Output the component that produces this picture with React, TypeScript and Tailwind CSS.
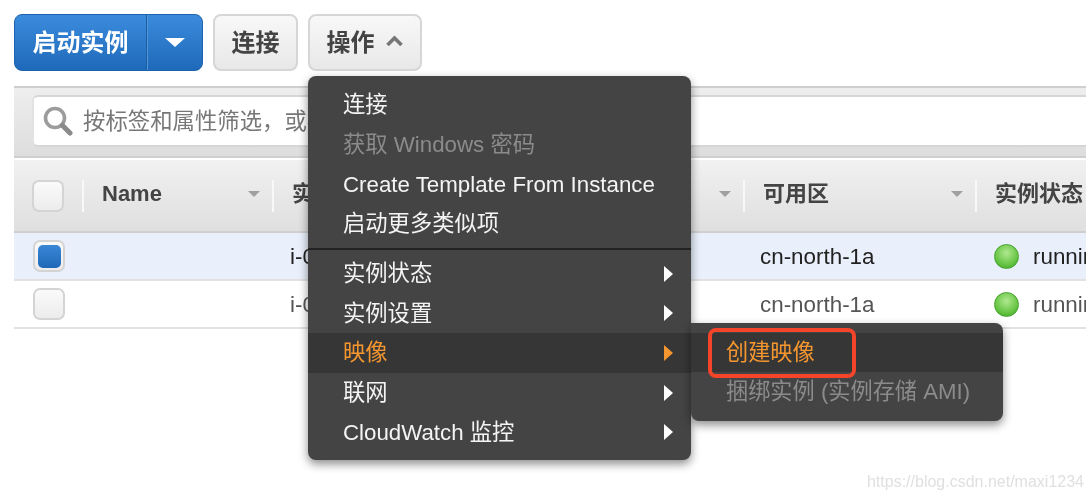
import React from "react";

const upperItems = [
  { label: "连接" },
  { label: "获取 Windows 密码", disabled: true },
  { label: "Create Template From Instance" },
  { label: "启动更多类似项" },
];

const lowerItems = [
  { label: "实例状态" },
  { label: "实例设置" },
  { label: "映像", active: true },
  { label: "联网" },
  { label: "CloudWatch 监控" },
];

function Caret({ className }: { className: string }) {
  return <span className={`h-0 w-0 border-x-[6px] border-t-[6px] border-x-transparent ${className}`} />;
}

function Checkbox({ checked }: { checked?: boolean }) {
  return (
    <div className="flex size-[32px] items-center justify-center rounded-[7px] border-2 border-[#d4d4d4] bg-gradient-to-b from-[#fafafa] to-[#ececec]">
      {checked && <div className="size-[23px] rounded-[5px] bg-gradient-to-b from-[#3a87d6] to-[#1f68b8]" />}
    </div>
  );
}

function HeaderCell({ label, width, caret = true }: { label: string; width: string; caret?: boolean }) {
  return (
    <div className={`flex h-[32px] shrink-0 items-center border-l-2 border-[#f8f8f8] pl-[18px] pr-[12px] ${width}`}>
      <span className="-mt-[5px] whitespace-nowrap text-[22px] font-bold text-[#444]">{label}</span>
      {caret && <Caret className="-mt-[3px] ml-auto border-t-[#a0a0a0]" />}
    </div>
  );
}

function Row({ selected, color }: { selected?: boolean; color: string }) {
  return (
    <div className={`flex h-[48px] items-center overflow-hidden border-b-2 border-[#e2e2e2] text-[22.4px] ${color} ${selected ? "bg-[#e9f0fb]" : "bg-white"}`}>
      <div className="w-[276px] shrink-0 pl-[19px]">
        <Checkbox checked={selected} />
      </div>
      <span className="w-[470px] shrink-0 whitespace-nowrap pt-[1px]">i-0</span>
      <span className="w-[234px] shrink-0 whitespace-nowrap pt-[1px]">cn-north-1a</span>
      <span className="size-[25px] shrink-0 rounded-full border border-[#46a32e] bg-[radial-gradient(circle_at_50%_35%,#b0e890,#62c23f_65%,#3f9c2a)]" />
      <span className="ml-[14px] whitespace-nowrap pt-[1px]">running</span>
    </div>
  );
}

function MenuRow({ label, disabled, active, arrow }: { label: string; disabled?: boolean; active?: boolean; arrow?: boolean }) {
  const tone = active ? "text-[#f5962f]" : disabled ? "text-[#8b8b8b]" : "text-[#f4f4f4]";
  return (
    <div className={`flex h-[39.7px] items-center pl-[35px] pr-[18px] text-[22.3px] ${tone} ${active ? "bg-[#363636]" : ""}`}>
      <span className="whitespace-nowrap">{label}</span>
      {arrow && (
        <span className={`ml-auto h-0 w-0 border-y-[8px] border-l-[9px] border-y-transparent ${active ? "border-l-[#f5962f]" : "border-l-white"}`} />
      )}
    </div>
  );
}

export default function App() {
  return (
    <div className="relative h-[500px] w-[1092px] overflow-hidden bg-white pl-[14px] pr-[6px] pt-[14px] font-['Liberation_Sans','Noto_Sans_CJK_SC',sans-serif] blur-[0.4px]">
      <div className="flex items-center">
        <div className="flex h-[57px] w-[189px] rounded-[8px] border border-[#1d63ad] bg-gradient-to-b from-[#3b8bdc] to-[#1f69ba] text-white">
          <div className="flex w-[132px] items-center justify-center border-r border-[#1a5ea6] text-[24px] font-bold">启动实例</div>
          <div className="flex flex-1 items-center justify-center border-l border-[#5495d8]">
            <span className="h-0 w-0 border-x-[10px] border-t-[9px] border-x-transparent border-t-white" />
          </div>
        </div>
        <button className="ml-[10px] flex h-[57px] w-[85px] items-center justify-center rounded-[8px] border-2 border-[#d6d6d6] bg-gradient-to-b from-[#f8f8f8] to-[#e8e8e8] text-[24px] font-bold text-[#444]">
          连接
        </button>
        <button className="ml-[10px] flex h-[57px] w-[114px] items-center justify-center gap-[11px] rounded-[8px] border-2 border-[#d6d6d6] bg-gradient-to-b from-[#f8f8f8] to-[#e8e8e8] pr-[1px] text-[24px] font-bold text-[#444]">
          操作
          <svg width="17" height="11" viewBox="0 0 17 11" fill="none" className="-mt-[4px]">
            <path d="M1.5 10 8.5 3 15.5 10" stroke="#777" strokeWidth="3.6" />
          </svg>
        </button>
      </div>

      <div className="mt-[15px] h-[72px] border-y-2 border-[#cfcfcf] bg-gradient-to-b from-[#eeeeee] to-[#dddddd] pb-[9px] pl-[18px] pt-[7px]">
        <div className="flex h-full items-center rounded-l-[6px] border-y-2 border-l-2 border-y-[#d6d6d6] border-l-[#e2e2e2] bg-white pl-[9px]">
          <svg width="30" height="30" viewBox="0 0 30 30" fill="none" className="shrink-0">
            <circle cx="12" cy="12" r="9.5" stroke="#9c9c9c" strokeWidth="3.6" />
            <path d="M19.5 19.5 27 27" stroke="#8a8a8a" strokeWidth="5" strokeLinecap="round" />
          </svg>
          <span className="ml-[10px] whitespace-nowrap pt-[1px] text-[22.4px] text-[#777]">按标签和属性筛选，或按关键字搜索</span>
        </div>
      </div>

      <div className="mt-[2px] flex h-[73px] items-center border-b-2 border-[#cfcfcf] bg-gradient-to-b from-[#f1f1f1] to-[#dfdfdf]">
        <div className="w-[68px] shrink-0 pl-[18px]">
          <Checkbox />
        </div>
        <HeaderCell label="Name" width="w-[190px]" />
        <HeaderCell label="实例 ID" width="w-[471px]" />
        <HeaderCell label="可用区" width="w-[232px]" />
        <HeaderCell label="实例状态" width="w-[111px]" caret={false} />
      </div>
      <Row selected color="text-[#222]" />
      <Row color="text-[#555]" />

      <div className="absolute left-[308px] top-[76px] w-[383px] rounded-[8px] bg-[#444444] pb-[8px] pt-[9px] shadow-[0_4px_10px_rgba(0,0,0,0.45)]">
        {upperItems.map((item) => (
          <MenuRow key={item.label} {...item} />
        ))}
        <div className="my-[4px] border-t-2 border-[#222]" />
        {lowerItems.map((item) => (
          <MenuRow key={item.label} {...item} arrow />
        ))}
      </div>

      <div className="absolute left-[691px] top-[323px] h-[98px] w-[312px] rounded-r-[8px] rounded-bl-[8px] bg-[#444444] pt-[10px] shadow-[0_4px_10px_rgba(0,0,0,0.45)]">
        <div className="flex h-[39px] items-center bg-[#363636] pl-[35px] text-[22.2px] text-[#f5962f]">创建映像</div>
        <div className="flex h-[39px] items-center whitespace-nowrap pl-[35px] text-[22.2px] text-[#8b8b8b]">捆绑实例 (实例存储 AMI)</div>
      </div>
      <div className="absolute left-[708px] top-[328px] h-[50px] w-[148px] rounded-[8px] border-[4px] border-[#f4442a]" />

      <div className="absolute right-[8px] top-[470px] text-[16px] text-[#e0e0e0]">https://blog.csdn.net/maxi1234</div>
    </div>
  );
}
